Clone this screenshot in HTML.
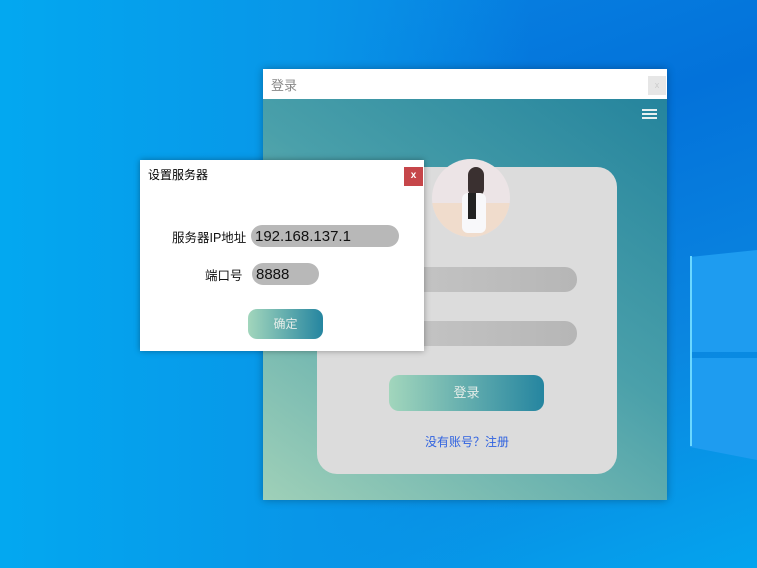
<!DOCTYPE html>
<html><head><meta charset="utf-8"><style>
*{margin:0;padding:0;box-sizing:border-box}
body{width:757px;height:568px;overflow:hidden;position:relative;font-family:"Liberation Sans","Noto Sans CJK SC",sans-serif;
background:linear-gradient(160deg,#0a8ae6 0%,#0372da 40%,#0a86e0 70%,#04a4ee 100%);}
.abs{position:absolute}
</style></head><body>
<div class="abs" style="left:0;top:0;width:757px;height:568px;background:linear-gradient(90deg,#03a8f0 0%,#0896e8 40%,rgba(0,120,220,0) 70%)"></div>
<!-- windows logo panes -->
<div class="abs" style="left:690px;top:250px;width:67px;height:210px;background:#1e9cf0;clip-path:polygon(0 7px,67px 0,67px 102px,0 102px,0 108px,67px 108px,67px 210px,0 197px)"></div>
<div class="abs" style="left:690px;top:256px;width:2px;height:190px;background:#6ad8ff"></div>
<!-- main window -->
<div class="abs" style="left:263px;top:69px;width:404px;height:431px;box-shadow:0 0 8px rgba(0,0,0,.3)">
  <div class="abs" style="left:0;top:0;width:404px;height:30px;background:#fff">
    <span class="abs" style="left:8px;top:6px;font-size:13px;color:#888">登录</span>
    <div class="abs" style="left:385px;top:7px;width:18px;height:19px;background:#e6e6e6;color:#ccc;font-size:9px;text-align:center;line-height:19px">x</div>
  </div>
  <div class="abs" style="left:0;top:30px;width:404px;height:401px;background:linear-gradient(215deg,#25849d 0%,#4aa0aa 45%,#9fd0b8 100%)">
    <div class="abs" style="left:379px;top:10px;width:15px;height:2px;background:#e8f0f0;box-shadow:0 4px 0 #e8f0f0,0 8px 0 #e8f0f0"></div>
    <div class="abs" style="left:54px;top:68px;width:300px;height:307px;background:#dcdcdc;border-radius:20px">
      <div class="abs" style="left:40px;top:100px;width:220px;height:25px;border-radius:12px;background:linear-gradient(90deg,#c8c8c8,#b6b6b6)"></div>
      <div class="abs" style="left:40px;top:154px;width:220px;height:25px;border-radius:12px;background:linear-gradient(90deg,#c8c8c8,#b6b6b6)"></div>
      <div class="abs" style="left:72px;top:208px;width:155px;height:36px;border-radius:10px;background:linear-gradient(90deg,#a2d6bc,#2585a0);color:#e4ece8;font-size:13px;text-align:center;line-height:36px">登录</div>
      <div class="abs" style="left:0;top:266px;width:300px;text-align:center;font-size:12px;color:#2f62e0">没有账号？注册</div>
    </div>
    <div class="abs" style="left:169px;top:60px;width:78px;height:78px;border-radius:50%;background:#ece4e6;overflow:hidden">
      <div class="abs" style="left:0;top:44px;width:78px;height:34px;background:#f0dccc"></div>
      <div class="abs" style="left:36px;top:8px;width:16px;height:30px;background:#3a3030;border-radius:8px"></div>
      <div class="abs" style="left:30px;top:34px;width:24px;height:40px;background:#f8f8fa;border-radius:6px"></div>
      <div class="abs" style="left:36px;top:34px;width:8px;height:26px;background:#222"></div>
    </div>
  </div>
</div>
<!-- dialog -->
<div class="abs" style="left:140px;top:160px;width:284px;height:191px;background:#fff;box-shadow:0 0 6px rgba(0,0,0,.35)">
  <span class="abs" style="left:8px;top:6px;font-size:12px;color:#000">设置服务器</span>
  <div class="abs" style="left:264px;top:7px;width:19px;height:19px;background:#c6464a;color:#fff;font-size:10px;font-weight:bold;text-align:center;line-height:18px">x</div>
  <span class="abs" style="left:32px;top:67px;font-size:12.5px;color:#111">服务器IP地址</span>
  <div class="abs" style="left:111px;top:65px;width:148px;height:22px;border-radius:11px;background:#b8b8b8;font-size:15px;line-height:24px;padding-left:4px;color:#111">192.168.137.1</div>
  <span class="abs" style="left:65px;top:105px;font-size:12.5px;color:#111">端口号</span>
  <div class="abs" style="left:112px;top:103px;width:67px;height:22px;border-radius:11px;background:#b8b8b8;font-size:15px;line-height:23px;padding-left:4px;color:#111">8888</div>
  <div class="abs" style="left:108px;top:149px;width:75px;height:30px;border-radius:9px;background:linear-gradient(90deg,#a2d6bc,#2585a0);color:#e4ece8;font-size:12px;text-align:center;line-height:30px">确定</div>
</div>
</body></html>
